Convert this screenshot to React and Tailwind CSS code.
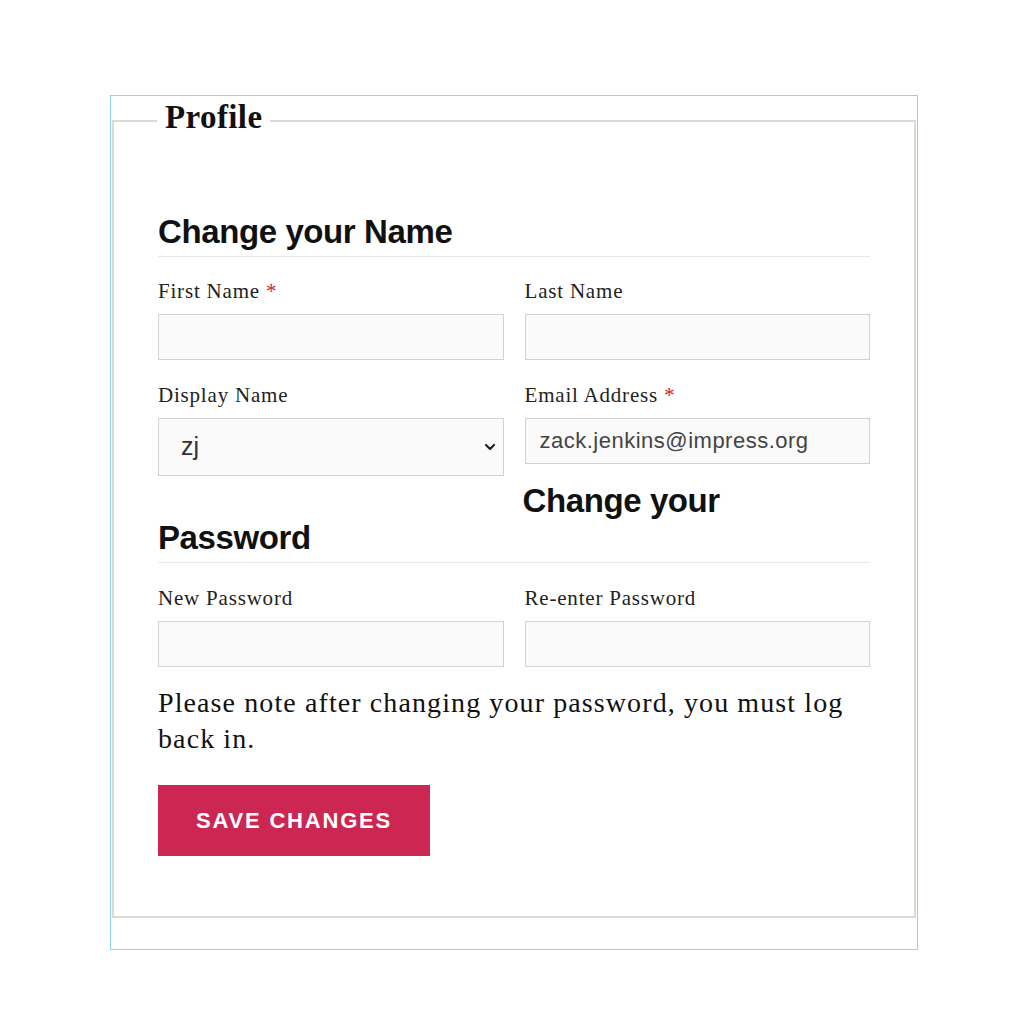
import React from 'react';
import { ChevronDown } from 'lucide-react';

const serif = 'font-["Liberation_Serif",serif]';
const sans = 'font-["Liberation_Sans",Arial,sans-serif]';

const Label = ({ children, required }) => (
    <label className={`block text-[21px] leading-[28px] text-[#222] tracking-[0.8px] ${serif}`}>
        {children}
        {required && <span className="text-[#d0222d]"> *</span>}
    </label>
);

const TextInput = (props) => (
    <input
        {...props}
        className={`mt-[9px] block w-full h-[46px] border border-[#d2d2d2] bg-[#fafafa] px-[14px] text-[22px] tracking-[0.5px] text-[#444] ${sans} outline-none`}
    />
);

const Field = ({ label, required, children }) => (
    <div>
        <Label required={required}>{label}</Label>
        {children}
    </div>
);

const ProfileForm = () => {
    return (
        <div className="min-h-screen bg-white pt-[95px] pb-[70px]">
            <div className="ml-[110px] w-[808px] border border-[#86d8f3] px-px pt-[4px] pb-[31px]">
                <fieldset className="border-2 border-[#dedad0] px-[44px] pb-[60px]">
                    <legend className={`-ml-px px-[8px] pb-[8px] text-[33px] leading-[34px] font-bold tracking-[0.4px] text-[#111] ${serif}`}>
                        Profile
                    </legend>

                    {/* Name */}
                    <h3 className={`mt-[71px] pb-[6px] border-b border-[#e8e8e8] text-[33px] leading-[37px] font-bold tracking-[-0.4px] text-[#111] ${sans}`}>
                        Change your Name
                    </h3>
                    <div className="grid grid-cols-2 gap-x-[21px] gap-y-[21px] mt-[20px]">
                        <Field label="First Name" required>
                            <TextInput type="text" />
                        </Field>
                        <Field label="Last Name">
                            <TextInput type="text" />
                        </Field>
                        <Field label="Display Name">
                            <div className="relative mt-[9px]">
                                <select
                                    defaultValue="zj"
                                    className={`block w-full h-[58px] appearance-none border border-[#d2d2d2] bg-[#fafafa] pl-[22px] text-[25px] text-[#333] ${sans} outline-none`}
                                >
                                    <option value="zj">zj</option>
                                    <option value="zack">Zack</option>
                                    <option value="zack-jenkins">Zack Jenkins</option>
                                </select>
                                <ChevronDown size={16} strokeWidth={3.2} className="absolute right-[6px] top-[21px] text-[#222] pointer-events-none" />
                            </div>
                        </Field>
                        <div>
                            <Field label="Email Address" required>
                                <TextInput type="email" defaultValue="zack.jenkins@impress.org" />
                            </Field>
                            <h3 className={`mt-[18px] -ml-[2px] text-[33px] leading-[37px] font-bold tracking-[-0.4px] text-[#111] ${sans}`}>
                                Change your
                            </h3>
                        </div>
                    </div>

                    {/* Password */}
                    <h3 className={`pb-[6px] border-b border-[#e8e8e8] text-[33px] leading-[37px] font-bold tracking-[-0.4px] text-[#111] ${sans}`}>
                        Password
                    </h3>
                    <div className="grid grid-cols-2 gap-x-[21px] mt-[21px]">
                        <Field label="New Password">
                            <TextInput type="password" />
                        </Field>
                        <Field label="Re-enter Password">
                            <TextInput type="password" />
                        </Field>
                    </div>

                    <p className={`mt-[18px] text-[28px] leading-[36px] tracking-[1.1px] text-[#111] ${serif}`}>
                        Please note after changing your password, you must log back in.
                    </p>

                    <button
                        type="button"
                        className={`mt-[28px] w-[272px] h-[71px] bg-[#cc2652] text-white text-[22px] font-semibold tracking-[1.8px] ${sans}`}
                    >
                        SAVE CHANGES
                    </button>
                </fieldset>
            </div>
        </div>
    );
};

export default function App() {
    return <ProfileForm />;
}
